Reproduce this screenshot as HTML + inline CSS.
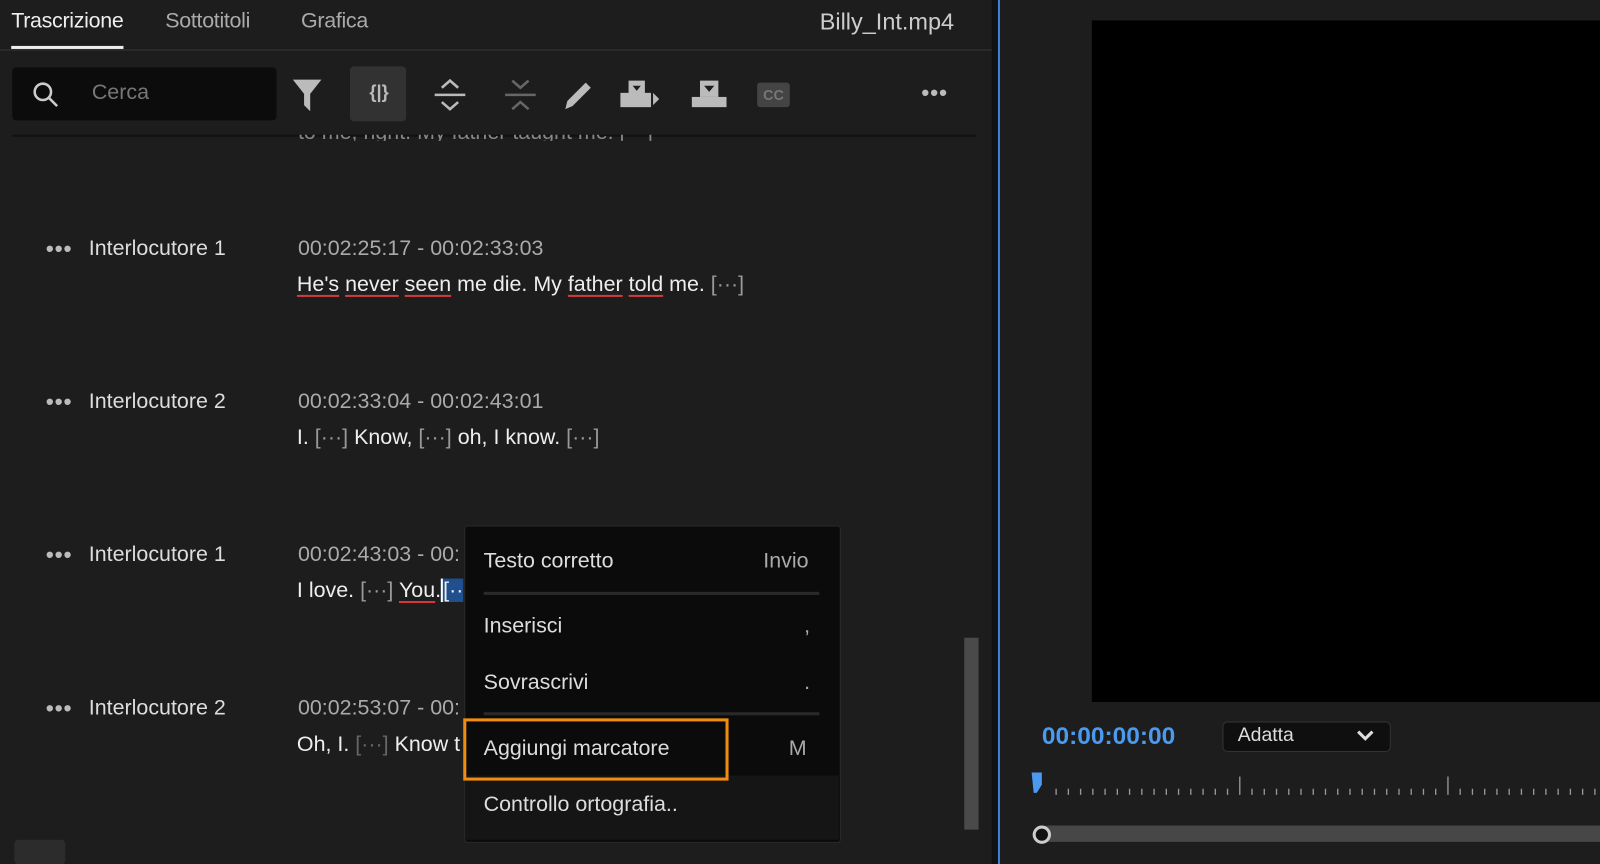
<!DOCTYPE html><html><head><style>
body{margin:0;width:1600px;height:847px;background:#1d1d1d;font-family:"Liberation Sans",sans-serif;overflow:hidden;position:relative;color:#ddd}
#w{position:absolute;left:0;top:0;width:1568px;height:830px;transform:scale(1.0204);transform-origin:0 0}
.a{position:absolute;white-space:nowrap}
.t{font-size:21px;letter-spacing:0}
u{text-decoration:underline;text-decoration-color:#d23a3a;text-underline-offset:4px}
.g{color:#999}
.dots{font-size:22px;letter-spacing:1px;font-weight:bold;color:#bbb}
</style></head><body><div id="w">
<div class="a t" style="left:11px;top:9px;color:#eee;letter-spacing:-0.3px">Trascrizione</div>
<div class="a" style="left:11px;top:45px;width:110px;height:3px;background:#eee"></div>
<div class="a t" style="left:162px;top:9px;color:#aaa;letter-spacing:-0.3px">Sottotitoli</div>
<div class="a t" style="left:295px;top:9px;color:#aaa;letter-spacing:-0.3px">Grafica</div>
<div class="a" style="right:633px;top:8px;color:#ccc;font-size:23px">Billy_Int.mp4</div>
<div class="a" style="left:0;top:48px;width:972px;height:2px;background:#2a2a2a"></div>
<div class="a" style="left:12px;top:66px;width:259px;height:52px;background:#0c0c0c;border-radius:4px"></div>
<svg class="a" style="left:30px;top:78px" width="30" height="30"><circle cx="12" cy="12" r="8" stroke="#ccc" stroke-width="2.5" fill="none"/><line x1="18" y1="18" x2="26" y2="26" stroke="#ccc" stroke-width="2.5"/></svg>
<div class="a t" style="left:90px;top:79px;color:#777">Cerca</div>
<svg class="a" style="left:285px;top:75px" width="32" height="36"><path d="M2 3H30L19 17V34L13 28V17Z" fill="#bbb"/></svg>
<div class="a" style="left:343px;top:65px;width:55px;height:54px;background:#323232;border-radius:4px"></div>
<div class="a" style="left:362px;top:80px;color:#bbb;font-size:18px;font-weight:bold">{|}</div>
<svg class="a" style="left:423px;top:74px" width="36" height="38"><path d="M10 12L18 5L26 12M10 26L18 33L26 26" stroke="#bbb" stroke-width="2.5" fill="none"/><line x1="3" y1="19" x2="33" y2="19" stroke="#bbb" stroke-width="2.5"/></svg>
<svg class="a" style="left:492px;top:74px" width="36" height="38"><path d="M10 5L18 12L26 5M10 33L18 26L26 33" stroke="#666" stroke-width="2.5" fill="none"/><line x1="3" y1="19" x2="33" y2="19" stroke="#666" stroke-width="2.5"/></svg>
<svg class="a" style="left:550px;top:77px" width="32" height="32"><path d="M4 30L6 22L24 4L29 9L11 27Z" fill="#bbb"/></svg>
<svg class="a" style="left:606px;top:77px" width="40" height="30"><rect x="10" y="2" width="16" height="14" fill="#bbb"/><rect x="2" y="14" width="30" height="14" fill="#bbb"/><path d="M14 7H22L18 12Z" fill="#1d1d1d"/><path d="M34 14L40 20L34 26Z" fill="#bbb"/></svg>
<svg class="a" style="left:676px;top:77px" width="38" height="30"><rect x="10" y="2" width="18" height="16" fill="#bbb"/><rect x="2" y="18" width="34" height="10" fill="#bbb"/><path d="M14 7H24L19 13Z" fill="#1d1d1d"/></svg>
<div class="a" style="left:742px;top:81px;width:32px;height:24px;background:#444;border-radius:3px;color:#777;font-size:14px;font-weight:bold;text-align:center;line-height:24px">CC</div>
<div class="a dots" style="left:903px;top:78px">•••</div>
<div class="a" style="left:12px;top:132px;width:945px;height:2px;background:#111"></div>
<div class="a t" style="left:292px;top:118px;color:#888;height:20px;overflow:hidden;clip-path:inset(14px 0 0 0)">to me, <u>right</u>. My <u>father</u> <u>taught</u> me. [···]</div>

<div class="a dots" style="left:45px;top:231px">•••</div><div class="a t" style="left:87px;top:232px">Interlocutore 1</div>
<div class="a t" style="left:292px;top:232px;color:#aaa">00:02:25:17 - 00:02:33:03</div>
<div class="a t" style="left:291px;top:267px;color:#eee"><u>He's</u> <u>never</u> <u>seen</u> me die. My <u>father</u> <u>told</u> me. <span class="g">[···]</span></div>

<div class="a dots" style="left:45px;top:381px">•••</div><div class="a t" style="left:87px;top:382px">Interlocutore 2</div>
<div class="a t" style="left:292px;top:382px;color:#aaa">00:02:33:04 - 00:02:43:01</div>
<div class="a t" style="left:291px;top:417px;color:#eee">I. <span class="g">[···]</span> Know, <span class="g">[···]</span> oh, I know. <span class="g">[···]</span></div>

<div class="a dots" style="left:45px;top:531px">•••</div><div class="a t" style="left:87px;top:532px">Interlocutore 1</div>
<div class="a t" style="left:292px;top:532px;color:#aaa">00:02:43:03 - 00:</div>
<div class="a t" style="left:291px;top:567px;color:#eee">I love. <span class="g">[···]</span> <u>You</u>.<span style="border-left:2px solid #fff;background:#1f4f8f">[··</span></div>

<div class="a dots" style="left:45px;top:681px">•••</div><div class="a t" style="left:87px;top:682px">Interlocutore 2</div>
<div class="a t" style="left:292px;top:682px;color:#aaa">00:02:53:07 - 00:</div>
<div class="a t" style="left:291px;top:718px;color:#eee">Oh, I. <span style="color:#666">[···]</span> Know t</div>

<div class="a" style="left:945px;top:625px;width:14px;height:188px;background:#4a4a4a"></div>
<div class="a" style="left:14px;top:823px;width:50px;height:24px;background:#2c2c2c;border-radius:4px"></div>

<div class="a" style="left:455px;top:515px;width:367px;height:309px;background:#0b0b0b;border:1px solid #2a2a2a;border-radius:3px"></div>
<div class="a" style="left:456px;top:760px;width:366px;height:63px;background:#151515"></div>
<div class="a t" style="left:474px;top:538px;color:#ddd">Testo corretto</div><div class="a t" style="left:748px;top:538px;color:#aaa">Invio</div>
<div class="a" style="left:474px;top:580px;width:329px;height:3px;background:#2a2a2a"></div>
<div class="a t" style="left:474px;top:602px;color:#ddd">Inserisci</div><div class="a t" style="left:788px;top:602px;color:#aaa">,</div>
<div class="a t" style="left:474px;top:657px;color:#ddd">Sovrascrivi</div><div class="a t" style="left:788px;top:657px;color:#aaa">.</div>
<div class="a" style="left:474px;top:698px;width:329px;height:3px;background:#2a2a2a"></div>
<div class="a" style="left:454px;top:704px;width:254px;height:55px;border:3px solid #f08c10"></div>
<div class="a t" style="left:474px;top:722px;color:#ddd">Aggiungi marcatore</div><div class="a t" style="left:773px;top:722px;color:#aaa">M</div>
<div class="a t" style="left:474px;top:777px;color:#ddd">Controllo ortografia..</div>

<div class="a" style="left:972px;top:0;width:8px;height:847px;background:#111"></div>
<div class="a" style="left:978px;top:0;width:2px;height:847px;background:#3a7fd8"></div>
<div class="a" style="left:1070px;top:20px;width:530px;height:668px;background:#000"></div>
<div class="a" style="left:1021px;top:708px;color:#4a9af0;font-size:24px;font-weight:bold">00:00:00:00</div>
<div class="a" style="left:1198px;top:707px;width:163px;height:28px;background:#0f0f0f;border:1px solid #333;border-radius:5px"></div>
<div class="a t" style="left:1213px;top:710px;font-size:19px;color:#ddd">Adatta</div>
<svg class="a" style="left:1328px;top:714px" width="20" height="14"><path d="M3 3L10 10L17 3" stroke="#ddd" stroke-width="3" fill="none"/></svg>
<svg class="a" style="left:1005px;top:755px" width="595" height="30"><path d="M6 2H16V14L11 22H8Z" fill="#4a9af0"/>
<g stroke="#999" stroke-width="1.3">
<line x1="30" y1="18" x2="30" y2="24"/><line x1="42" y1="18" x2="42" y2="24"/><line x1="54" y1="18" x2="54" y2="24"/><line x1="66" y1="18" x2="66" y2="24"/><line x1="78" y1="18" x2="78" y2="24"/><line x1="90" y1="18" x2="90" y2="24"/><line x1="102" y1="18" x2="102" y2="24"/><line x1="114" y1="18" x2="114" y2="24"/><line x1="126" y1="18" x2="126" y2="24"/><line x1="138" y1="18" x2="138" y2="24"/><line x1="150" y1="18" x2="150" y2="24"/><line x1="162" y1="18" x2="162" y2="24"/><line x1="174" y1="18" x2="174" y2="24"/><line x1="186" y1="18" x2="186" y2="24"/><line x1="198" y1="18" x2="198" y2="24"/><line x1="210" y1="6" x2="210" y2="24"/><line x1="222" y1="18" x2="222" y2="24"/><line x1="234" y1="18" x2="234" y2="24"/><line x1="246" y1="18" x2="246" y2="24"/><line x1="258" y1="18" x2="258" y2="24"/><line x1="270" y1="18" x2="270" y2="24"/><line x1="282" y1="18" x2="282" y2="24"/><line x1="294" y1="18" x2="294" y2="24"/><line x1="306" y1="18" x2="306" y2="24"/><line x1="318" y1="18" x2="318" y2="24"/><line x1="330" y1="18" x2="330" y2="24"/><line x1="342" y1="18" x2="342" y2="24"/><line x1="354" y1="18" x2="354" y2="24"/><line x1="366" y1="18" x2="366" y2="24"/><line x1="378" y1="18" x2="378" y2="24"/><line x1="390" y1="18" x2="390" y2="24"/><line x1="402" y1="18" x2="402" y2="24"/><line x1="414" y1="6" x2="414" y2="24"/><line x1="426" y1="18" x2="426" y2="24"/><line x1="438" y1="18" x2="438" y2="24"/><line x1="450" y1="18" x2="450" y2="24"/><line x1="462" y1="18" x2="462" y2="24"/><line x1="474" y1="18" x2="474" y2="24"/><line x1="486" y1="18" x2="486" y2="24"/><line x1="498" y1="18" x2="498" y2="24"/><line x1="510" y1="18" x2="510" y2="24"/><line x1="522" y1="18" x2="522" y2="24"/><line x1="534" y1="18" x2="534" y2="24"/><line x1="546" y1="18" x2="546" y2="24"/><line x1="558" y1="18" x2="558" y2="24"/><line x1="570" y1="18" x2="570" y2="24"/><line x1="582" y1="18" x2="582" y2="24"/><line x1="594" y1="18" x2="594" y2="24"/>
</g></svg>
<div class="a" style="left:1020px;top:809px;width:580px;height:16px;background:#474747;border-radius:8px 0 0 8px"></div>
<div class="a" style="left:1012px;top:809px;width:12px;height:12px;border:3px solid #ccc;border-radius:50%;background:#111"></div>
</div></body></html>
